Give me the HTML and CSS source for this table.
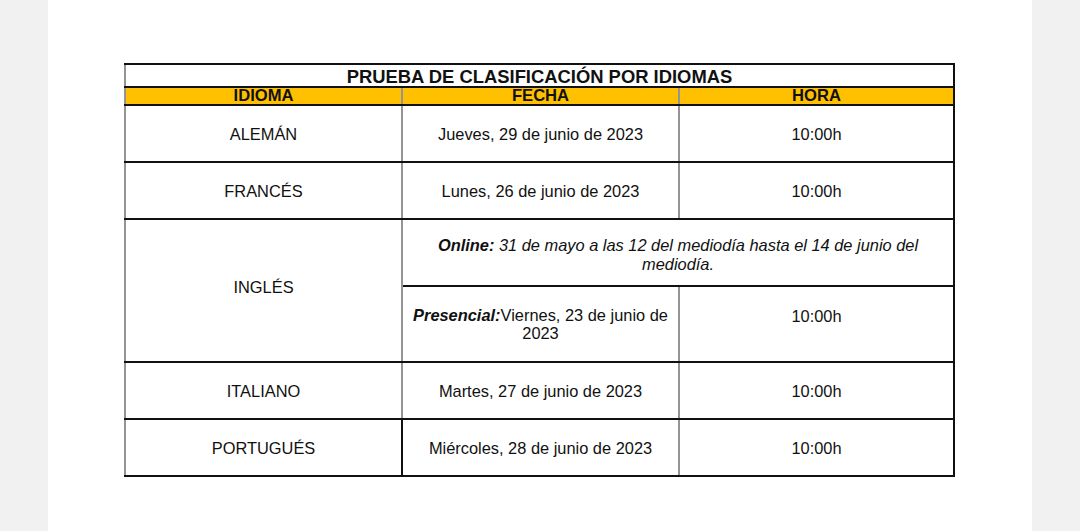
FILE: index.html
```html
<!DOCTYPE html>
<html lang="es">
<head>
<meta charset="utf-8">
<title>Prueba de clasificación por idiomas</title>
<link rel="stylesheet" href="styles.css">
</head>
<body>
<div class="page">
  <table class="sched">
    <colgroup><col class="c1"><col class="c2"><col class="c3"></colgroup>
    <tr class="r-title"><td colspan="3" class="title">PRUEBA DE CLASIFICACIÓN POR IDIOMAS</td></tr>
    <tr class="r-head"><th>IDIOMA</th><th>FECHA</th><th>HORA</th></tr>
    <tr class="r-data"><td>ALEMÁN</td><td>Jueves, 29 de junio de 2023</td><td>10:00h</td></tr>
    <tr class="r-data"><td>FRANCÉS</td><td>Lunes, 26 de junio de 2023</td><td>10:00h</td></tr>
    <tr class="r-online"><td rowspan="2" class="lang-up">INGLÉS</td><td colspan="2" class="online"><b>Online:</b> 31 de mayo a las 12 del mediodía hasta el 14 de junio del mediodía.</td></tr>
    <tr class="r-pres"><td class="pres"><b><i>Presencial:</i></b>Viernes, 23 de junio de 2023</td><td class="top">10:00h</td></tr>
    <tr class="r-data"><td>ITALIANO</td><td>Martes, 27 de junio de 2023</td><td>10:00h</td></tr>
    <tr class="r-data r-last"><td>PORTUGUÉS</td><td>Miércoles, 28 de junio de 2023</td><td>10:00h</td></tr>
  </table>
</div>
</body>
</html>
```
FILE: styles.css
```css
html, body {
  margin: 0;
  padding: 0;
  background: #f1f1f1;
}
.page {
  width: 984px;
  height: 531px;
  margin: 0 auto;
  background: #ffffff;
  padding: 63px 0 0 76px;
  box-sizing: border-box;
  font-family: "Liberation Sans", Arial, sans-serif;
  color: #111111;
}
.sched {
  border-collapse: collapse;
  width: 831px;
  table-layout: fixed;
  font-size: 16.4px;
  line-height: 18px;
}
.c1, .c2 { width: 277px; }
.sched td, .sched th {
  text-align: center;
  vertical-align: middle;
  padding: 0 12px;
  border-top: 2px solid #111;
  border-bottom: 2px solid #111;
  border-left: 2px solid #949494;
  border-right: 2px solid #949494;
}
.sched td:last-child, .sched th:last-child { border-right-color: #111; }
.r-title td {
  height: 20px;
  font-weight: bold;
  font-size: 18.4px;
  line-height: 19px;
  padding-top: 1px;
  border-right-color: #111;
}
.r-head th {
  background: #ffc000;
  height: 16px;
  line-height: 16px;
  font-weight: bold;
  font-size: 16.6px;
}
.r-data td { height: 55px; }
.r-online td.online {
  height: 67px;
  font-style: italic;
  padding: 4px 30px 0;
  line-height: 19px;
  box-sizing: border-box;
}
.r-pres td.pres {
  height: 74px;
  padding: 0 4px;
}
.r-pres td.top {
  vertical-align: top;
  padding-top: 20px;
}
.lang-up { padding-bottom: 8px !important; }
.r-last td:first-child { border-right-color: #111; }
```
